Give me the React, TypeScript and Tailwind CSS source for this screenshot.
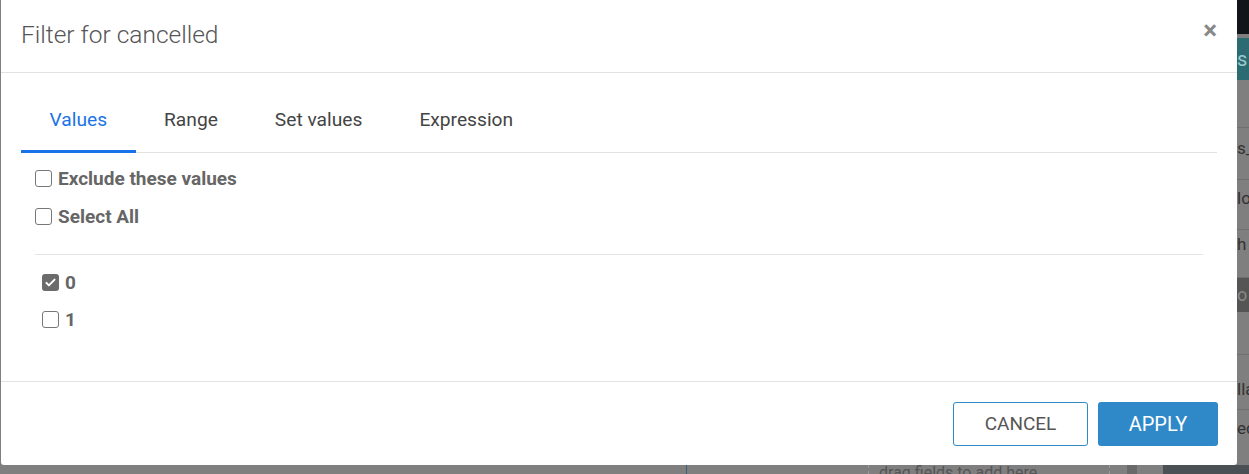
import { useState } from 'react';

const font = { fontFamily: 'Roboto, "Liberation Sans", sans-serif' };

function Box({ checked }: { checked: boolean }) {
  if (checked) {
    return (
      <span className="flex h-[17px] w-[17px] items-center justify-center rounded-[3px] bg-[#6b6b6b]">
        <svg viewBox="0 0 16 16" className="h-[13px] w-[13px]">
          <path d="M3 8.5l3 3 7-7" fill="none" stroke="#fff" strokeWidth="2.4" strokeLinecap="round" strokeLinejoin="round" />
        </svg>
      </span>
    );
  }
  return <span className="block h-[17px] w-[17px] rounded-[3px] border border-[#777] bg-white" />;
}

function CheckRow({ label, checked, onToggle }: { label: string; checked: boolean; onToggle: () => void }) {
  return (
    <label onClick={onToggle} className="flex h-[20px] cursor-pointer items-center gap-[6px]">
      <Box checked={checked} />
      <span className="text-[19px] font-bold leading-none text-[#666]">{label}</span>
    </label>
  );
}

// dimmed app behind the dialog; only its right and bottom edges show
function Backdrop() {
  const side = 'overflow-hidden whitespace-nowrap text-[17px] text-[#333] border-b border-[#6f6f6f]';
  return (
    <div className="grid h-full w-full grid-cols-[1237px_12px] grid-rows-[465px_9px] bg-[#7f7f7f]">
      <div />
      <div className="flex flex-col">
        <div className="h-[34px] bg-[#111418]" />
        <div className="mt-[4px] h-[42px] overflow-hidden bg-[#2d6b73] text-[20px] leading-[42px] text-[#9cc]">s</div>
        <div className="h-[48px] border-b border-[#6f6f6f]" />
        <div className={`${side} h-[52px] pt-[8px]`}>s_</div>
        <div className={`${side} h-[50px] pt-[6px]`}>lo</div>
        <div className={`${side} h-[48px] pt-[2px]`}>h</div>
        <div className="h-[34px] overflow-hidden bg-[#555] text-[18px] leading-[34px] text-[#888]">o</div>
        <div className="h-[43px] border-b border-[#6f6f6f]" />
        <div className={`${side} h-[55px] pt-[22px]`}>lla</div>
        <div className="overflow-hidden whitespace-nowrap pt-[6px] text-[17px] text-[#333]">ed</div>
      </div>
      <div className="col-span-2 flex overflow-hidden">
        <div className="w-[686px] shrink-0" />
        <div className="w-px shrink-0 bg-[#3b5f7a]" />
        <div className="w-[181px] shrink-0" />
        <div className="w-[242px] shrink-0 overflow-hidden whitespace-nowrap border-x border-dashed border-[#999] pl-[10px] text-[16px] leading-[16px] text-[#555]">drag fields to add here</div>
        <div className="w-[17px] shrink-0" />
        <div className="w-[10px] shrink-0 bg-[#6a6a6a]" />
        <div className="w-[26px] shrink-0" />
        <div className="flex-1 bg-[#4b5055]" />
      </div>
    </div>
  );
}

export default function App() {
  const [tab, setTab] = useState('Values');
  const [exclude, setExclude] = useState(false);
  const [all, setAll] = useState(false);
  const [vals, setVals] = useState<Record<string, boolean>>({ '0': true, '1': false });
  const tabs = ['Values', 'Range', 'Set values', 'Expression'];

  return (
    <div className="relative h-[474px] w-[1249px] overflow-hidden" style={font}>
      <Backdrop />
      <div className="absolute left-[1px] top-0 flex h-[465px] w-[1236px] flex-col rounded-b-[3px] bg-white">
        <div className="flex h-[73px] items-center justify-between border-b border-[#e2e2e2] pl-[20px] pr-[20px]">
          <h2 className="pb-[2px] text-[24.5px] font-light text-[#555]">Filter for cancelled</h2>
          <button className="mb-[12px] text-[26px] font-bold leading-none text-[#888]">×</button>
        </div>

        <div className="flex flex-1 flex-col px-[20px]">
          <div className="mt-[24px] flex border-b border-[#e2e2e2]">
            {tabs.map(t => (
              <button
                key={t}
                onClick={() => setTab(t)}
                className={`-mb-px h-[56px] border-b-[3px] px-[28.5px] pb-[6px] text-[19.2px] ${
                  tab === t ? 'border-[#1a73e8] text-[#1a73e8]' : 'border-transparent text-[#444]'
                }`}
              >
                {t}
              </button>
            ))}
          </div>

          <div className="flex flex-col gap-[18px] px-[14px] pt-[15px]">
            <CheckRow label="Exclude these values" checked={exclude} onToggle={() => setExclude(!exclude)} />
            <CheckRow label="Select All" checked={all} onToggle={() => setAll(!all)} />
          </div>
          <div className="mx-[14px] mt-[28px] border-t border-[#e4e4e4]" />
          <div className="flex flex-col gap-[17px] pl-[21px] pt-[17px]">
            {['0', '1'].map(v => (
              <CheckRow key={v} label={v} checked={vals[v]} onToggle={() => setVals({ ...vals, [v]: !vals[v] })} />
            ))}
          </div>
        </div>

        <div className="flex h-[84px] items-start justify-end gap-[10px] border-t border-[#e2e2e2] pr-[19px] pt-[20px]">
          <button className="h-[44px] w-[135px] rounded-[3px] border border-[#2f89c8] bg-white text-[19px] text-[#555]">CANCEL</button>
          <button className="h-[44px] w-[120px] rounded-[3px] bg-[#2f89c8] text-[20px] text-white">APPLY</button>
        </div>
      </div>
    </div>
  );
}
